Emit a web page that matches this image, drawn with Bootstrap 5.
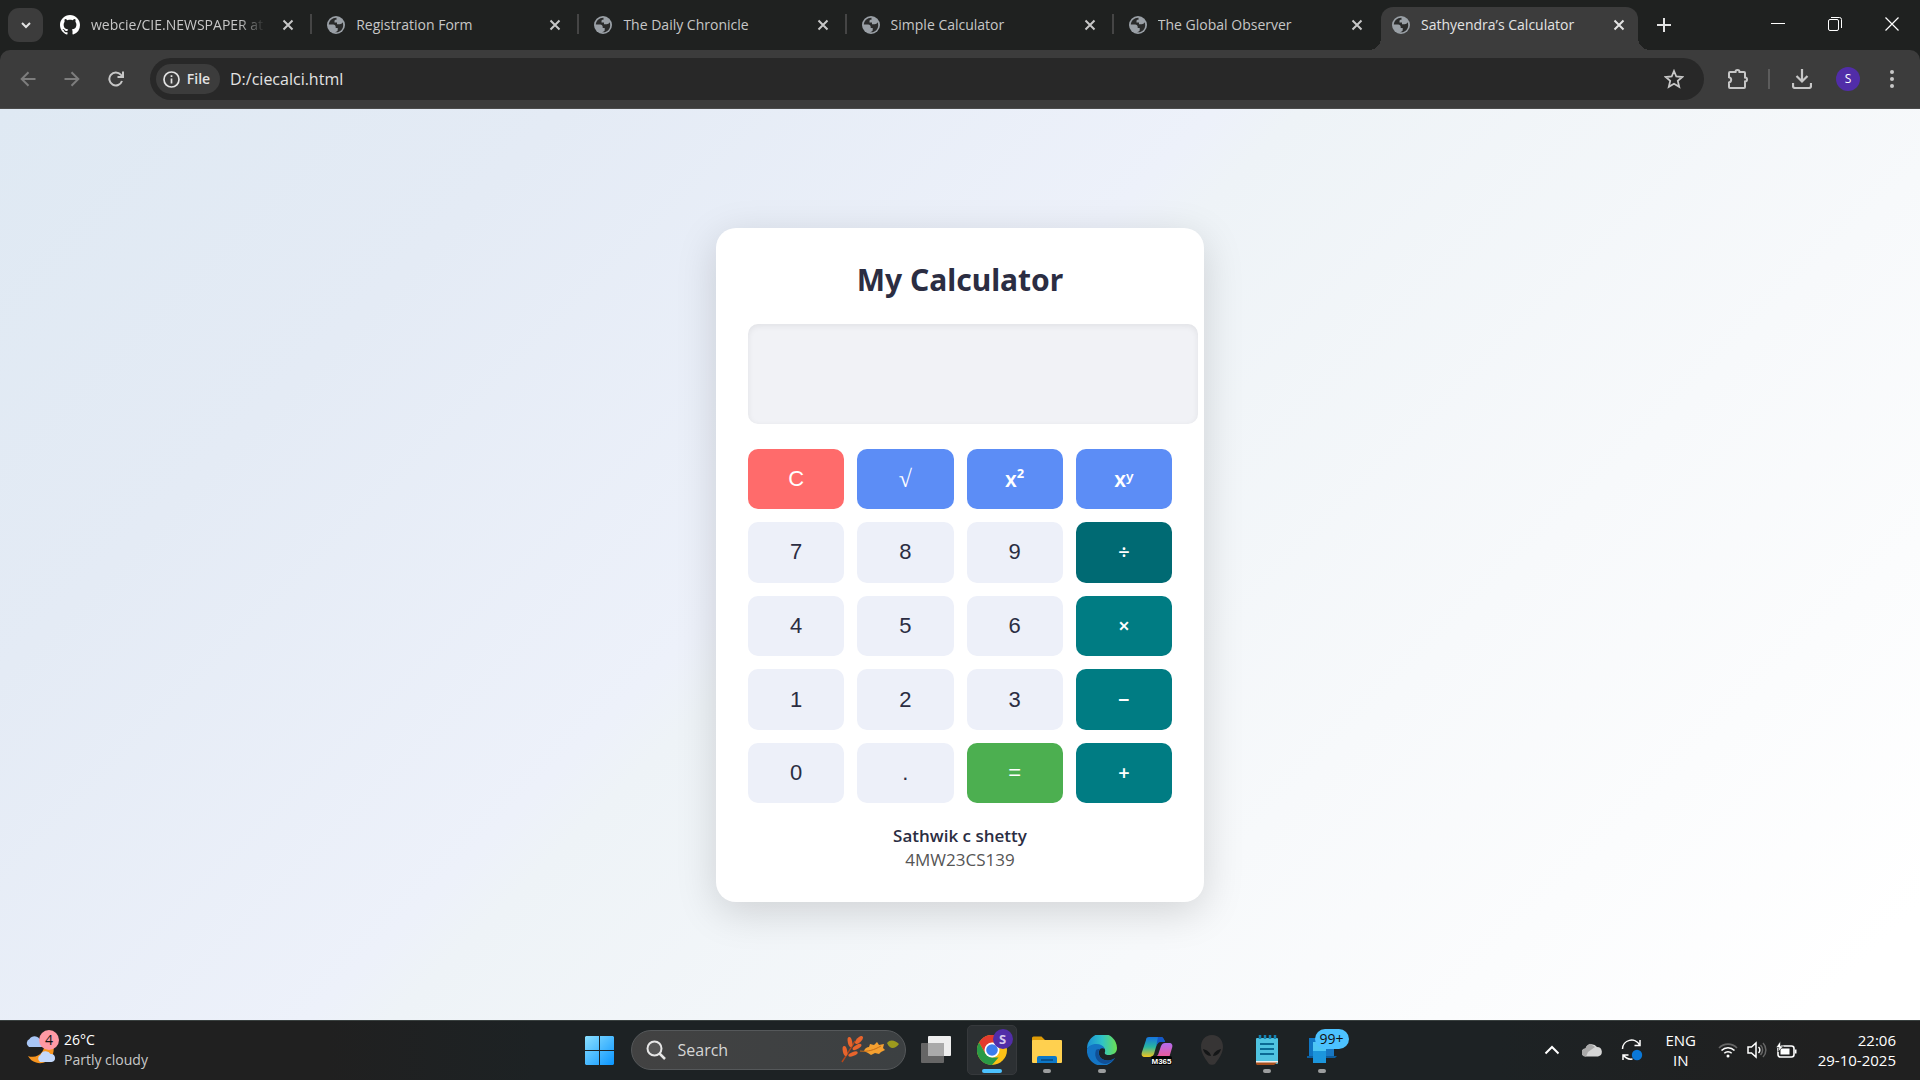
<!DOCTYPE html>
<html lang="en">
<head>
<meta charset="utf-8">
<meta name="viewport" content="width=device-width, initial-scale=1">
<title>Sathyendra’s Calculator</title>
<link href="https://cdn.jsdelivr.net/npm/bootstrap@5.3.0/dist/css/bootstrap.min.css" rel="stylesheet">
<style>
  body { font-family: "Open Sans", "Noto Sans", sans-serif; font-size: 14px; line-height: 20px; }
  button { font-family: inherit; }
  svg { display: block; flex: none; }
  .plain { background: none; border: 0; padding: 0; color: inherit; display: flex; align-items: center; justify-content: center; flex: none; }

  /* tab strip */
  .strip { background: #1f2120; height: 50px; color: #c7c7c7; padding-left: 8px; }
  .tab-menu { width: 35px; height: 34px; border-radius: 11px; background: #3c3c3c; color: #e3e3e3; }
  .tabs { padding-left: 8px; min-width: 0; flex: 0 1 1595px; }
  .tab-item { flex: 1 1 0; min-width: 0; height: 43px; padding: 0 17px 7px 15px; position: relative; }
  .tab-item .tab-name { color: inherit; text-decoration: none; flex: 1; white-space: nowrap; overflow: hidden; font-size: 14px; margin-left: 11px; }
  .tab-item:first-child { padding-left: 9px; }
  .tab-item .fade-end { -webkit-mask-image: linear-gradient(90deg, #000 85%, transparent); mask-image: linear-gradient(90deg, #000 85%, transparent); }
  .tab-item.split::after { content: ""; position: absolute; right: 0; top: 7px; width: 2px; height: 20px; background: #454545; }
  .tab-item.current { background: #3c3c3c; color: #e3e3e3; border-radius: 12px 12px 0 0; flex: 0 0 257px; padding: 0 12px 7px 11px; }
  .tab-item.current::before, .tab-item.current::after { content: ""; position: absolute; bottom: 0; width: 12px; height: 12px; }
  .tab-item.current::before { left: -12px; background: radial-gradient(circle at 0 0, transparent 12px, #3c3c3c 12px); }
  .tab-item.current::after { right: -12px; background: radial-gradient(circle at 100% 0, transparent 12px, #3c3c3c 12px); }
  .close-x { width: 14px; height: 14px; }
  .win { width: 57px; height: 40px; color: #fff; }

  /* toolbar */
  .stripwrap { background: #1f2120; }
  .tools { background: #3c3c3c; height: 59px; border-bottom: 1px solid #4b4b4b; color: #c7c7c7; border-radius: 10px 10px 0 0; padding: 0 6px; }
  .tool { width: 44px; height: 34px; }
  .dim { color: #7d7d7d; }
  .omni { background: #282828; height: 42px; border-radius: 21px; padding: 0 20px 0 6px; margin-left: 12px; }
  .chip { background: #3c3c3c; height: 30px; border-radius: 15px; padding: 0 10px 0 7px; color: #e3e3e3; font-size: 14px; font-weight: 600; gap: 7px; width: 64px; }
  .omni input { background: none; border: 0; outline: 0; color: #e3e3e3; font-size: 16px; padding: 0 0 0 10px; }
  .avatar { width: 24px; height: 24px; border-radius: 50%; background: #512da8; color: #fff; font-size: 12px; }
  .rule { width: 2px; height: 20px; background: #5c5c5c; }

  /* page */
  main { background: linear-gradient(135deg, #dfe9f3 0%, #e4ebf5 20%, #edf1fa 43%, #eef3f7 46%, #f7f9fb 70%, #fff 96%); }
  .calc { width: 488px; background: #fff; border-radius: 20px; padding: 32px 32px 30px; box-shadow: 0 10px 40px rgba(0,0,0,.15); color: #2b2d42; }
  .calc h1 { font: 700 30px/40px "Noto Sans", sans-serif; margin: 0 0 24px; }
  .screen { width: 450px; height: 100px; background: #f1f2f6; border: 0; border-radius: 10px; box-shadow: inset 0 2px 6px rgba(0,0,0,.07); padding: 15px; font-size: 32px; text-align: right; }
  .keys { display: grid; grid-template: repeat(5, 1fr) / repeat(4, 1fr); gap: 13px; height: 355px; margin-top: 25px; }
  .keys button { border: 0; padding: 0; border-radius: 10px; background: #edf0f9; color: #2b2d42; font: 400 22px/30px "Liberation Sans", Arial, sans-serif; }
  .keys .clear { background: #ff6b6b; color: #fff; }
  .keys .fn { background: #5c8df6; color: #fff; }
  .keys .root { font: 400 24px/30px "Liberation Serif", serif; }
  .keys .op { background: #007c83; color: #fff; font: 600 20px/30px "Noto Sans", sans-serif; }
  .keys .strong { font: 600 21px/30px "Noto Sans", sans-serif; }
  .keys .over { background: #006a73; }
  .keys .eq { background: #4caf50; color: #fff; }
  .owner { font-size: 17px; line-height: 24px; margin-top: 20px; }
  .owner-id { color: #555; }

  /* taskbar */
  .taskbar { height: 60px; color: #fff; border-top: 1px solid #39403f; padding-bottom: 1px; background: linear-gradient(90deg, #202020 0, #202020 17%, #1d2224 28%, #1d2224 78%, #202020 95%); }
  .side { flex: 1 1 0; min-width: 0; }
  .weather { padding-left: 24px; }
  .subtle { color: #c8c8c8; }
  .count { position: absolute; left: 15px; top: -4px; width: 20px; height: 20px; border-radius: 50%; background: #ff99a4; color: #111; font-size: 14px; text-align: center; line-height: 20px; }
  .start { width: 52px; }
  .find { width: 275px; height: 40px; border-radius: 20px; border: 1px solid #55585a; background: linear-gradient(90deg, #424242, #3c4042); padding: 0 6px 0 14px; margin: 0 7px 0 5px; }
  .find input { background: none; border: 0; outline: 0; color: #d6d6d6; font-size: 16px; padding: 0 0 0 12px; width: 150px; }
  .find input::placeholder { color: #d6d6d6; opacity: 1; }
  .apps { gap: 5px; }
  .app { width: 50px; height: 50px; border-radius: 5px; position: relative; border: 1px solid transparent; }
  .app.front { background: #2c3033; border-color: #36393c; }
  .app::after { content: ""; position: absolute; bottom: 1px; width: 8px; height: 4px; border-radius: 2px; background: #9b9d9e; }
  .app.front::after { width: 20px; background: #4cc2ff; }
  .app.idle::after { display: none; }
  .badge-s, .badge-99 { position: absolute; border-radius: 10px; font-size: 13px; line-height: 20px; }
  .badge-s { left: 25px; top: 3px; width: 20px; background: #512da8; color: #d5c8ee; font-weight: 700; }
  .badge-99 { left: 17px; top: 3px; width: 34px; background: #4cc2ff; color: #111; font-size: 14px; }
  .tray { padding-right: 24px; font-size: 15px; }
  .tray-icon { width: 40px; }
  .lang { width: 58px; }
</style>
</head>
<body class="d-flex flex-column vh-100 overflow-hidden">

<svg width="0" height="0" class="position-absolute" aria-hidden="true">
  <symbol id="globe" viewBox="0 0 18 18"><circle cx="9" cy="9" r="9" fill="#9aa0a6"/><path d="M9.500 1.800C5.400 1.600 2 5 1.800 8.600h4.400c1.500 0 2.500 1 2.500 2.400v1h2v2.300c0 .6-.8 1.200-2.700 1.900 5 .6 8.200-3 8.200-7 0-1.200-.2-2-.6-2.900-.5 1.300-1.600 2-3 2H10V6.600H7.500V5c0-.9.7-1.300 1.500-1.300h.5z" fill="#2a2b2b"/></symbol>
  <symbol id="x" viewBox="0 0 14 14"><path d="M2.500 2.500l9 9m0-9l-9 9" stroke="currentColor" stroke-width="2"/></symbol>
</svg>

<header>
  <div class="strip d-flex align-items-start">
    <button class="plain tab-menu mt-2" aria-label="Search tabs"><svg width="12" height="12" viewBox="0 0 12 12"><path d="M2 4l4 4 4-4" fill="none" stroke="currentColor" stroke-width="2"/></svg></button>
    <nav class="tabs d-flex align-self-end">
      <div class="tab-item split d-flex align-items-center">
        <svg width="20" height="20" viewBox="0 0 16 16" fill="#fff"><path d="M8 0C3.580 0 0 3.580 0 8c0 3.540 2.290 6.530 5.470 7.590.4.070.55-.17.55-.38 0-.19-.01-.82-.01-1.490-2.010.37-2.530-.49-2.690-.94-.09-.23-.48-.94-.82-1.130-.28-.15-.68-.52-.01-.53.63-.01 1.080.58 1.230.82.72 1.210 1.870.87 2.330.66.070-.52.28-.87.51-1.070-1.780-.2-3.640-.89-3.640-3.950 0-.87.31-1.590.82-2.150-.08-.2-.36-1.020.08-2.120 0 0 .67-.21 2.200.82.64-.18 1.320-.27 2-.27s1.360.09 2 .27c1.530-1.040 2.200-.82 2.200-.82.44 1.100.16 1.920.08 2.120.51.56.82 1.270.82 2.150 0 3.070-1.870 3.750-3.650 3.950.29.25.54.73.54 1.480 0 1.070-.01 1.930-.01 2.200 0 .21.15.46.55.38A8.010 8.010 0 0 0 16 8c0-4.420-3.580-8-8-8z"/></svg>
        <a href="#" class="tab-name fade-end me-3">webcie/CIE.NEWSPAPER at</a>
        <button class="plain" aria-label="Close tab"><svg class="close-x"><use href="#x"/></svg></button>
      </div>
      <div class="tab-item split d-flex align-items-center"><svg width="18" height="18"><use href="#globe"/></svg><a href="#" class="tab-name">Registration Form</a><button class="plain" aria-label="Close tab"><svg class="close-x"><use href="#x"/></svg></button></div>
      <div class="tab-item split d-flex align-items-center"><svg width="18" height="18"><use href="#globe"/></svg><a href="#" class="tab-name">The Daily Chronicle</a><button class="plain" aria-label="Close tab"><svg class="close-x"><use href="#x"/></svg></button></div>
      <div class="tab-item split d-flex align-items-center"><svg width="18" height="18"><use href="#globe"/></svg><a href="#" class="tab-name">Simple Calculator</a><button class="plain" aria-label="Close tab"><svg class="close-x"><use href="#x"/></svg></button></div>
      <div class="tab-item d-flex align-items-center"><svg width="18" height="18"><use href="#globe"/></svg><a href="#" class="tab-name">The Global Observer</a><button class="plain" aria-label="Close tab"><svg class="close-x"><use href="#x"/></svg></button></div>
      <div class="tab-item current d-flex align-items-center"><svg width="18" height="18"><use href="#globe"/></svg><a href="#" class="tab-name">Sathyendra’s Calculator</a><button class="plain" aria-label="Close tab"><svg class="close-x"><use href="#x"/></svg></button></div>
    </nav>
    <button class="plain mt-2 ms-2 tab-menu bg-transparent" aria-label="New tab"><svg width="14" height="14" viewBox="0 0 14 14"><path d="M7 0v14M0 7h14" stroke="currentColor" stroke-width="2"/></svg></button>
    <div class="d-flex ms-auto mt-1">
      <button class="plain win" aria-label="Minimize"><svg width="14" height="14"><path d="M0 6.500h14" stroke="currentColor"/></svg></button>
      <button class="plain win" aria-label="Restore"><svg width="14" height="14" fill="none" stroke="currentColor"><rect x=".5" y="2.500" width="10" height="11" rx="1.500"/><path d="M3 .5h8.500a2 2 0 0 1 2 2V11"/></svg></button>
      <button class="plain win" aria-label="Close"><svg width="14" height="14"><path d="M.5.5l13 13m0-13l-13 13" stroke="currentColor" stroke-width="1.200"/></svg></button>
    </div>
  </div>
  <div class="stripwrap">
  <div class="tools d-flex align-items-center">
    <button class="plain tool dim" aria-label="Back"><svg width="16" height="16" viewBox="0 0 16 16" fill="none" stroke="currentColor" stroke-width="2"><path d="M15.500 8H2M8.500 1.200L1.700 8l6.800 6.800"/></svg></button>
    <button class="plain tool dim" aria-label="Forward"><svg width="16" height="16" viewBox="0 0 16 16" fill="none" stroke="currentColor" stroke-width="2"><path d="M.5 8H14M7.500 1.200L14.300 8l-6.800 6.800"/></svg></button>
    <button class="plain tool" aria-label="Reload"><svg width="16" height="16" viewBox="0 0 16 16" fill="none" stroke="currentColor" stroke-width="2"><path d="M14 10a6.500 6.500 0 1 1-1.200-6.300L14.500 5.500M15 .5V6H9.500"/></svg></button>
    <div class="omni d-flex align-items-center flex-grow-1">
      <button class="plain chip"><svg width="17" height="17" viewBox="0 0 17 17" fill="none" stroke="currentColor" stroke-width="1.700"><circle cx="8.500" cy="8.500" r="7.500"/><path d="M8.500 7.500v5M8.500 4.300v1.800"/></svg>File</button>
      <input class="flex-grow-1" type="text" value="D:/ciecalci.html" aria-label="Address">
      <button class="plain" aria-label="Bookmark"><svg width="20" height="20" viewBox="0 0 20 20"><path d="M10 2l2.300 5.500 6 .5-4.500 3.900 1.400 5.900L10 14.700l-5.200 3.100 1.400-5.900L1.700 8l6-.5z" fill="none" stroke="currentColor" stroke-width="1.800"/></svg></button>
    </div>
    <button class="plain tool ms-2 me-1 ps-2" aria-label="Extensions"><svg width="22" height="22" viewBox="0 0 22 22"><path d="M3 4h5.500a2 2 0 0 1 4 0H17a1 1 0 0 1 1 1v4.500a2 2 0 0 1 0 4V19a1 1 0 0 1-1 1H3a1 1 0 0 1-1-1v-4.500a2.700 2.700 0 0 0 0-5.300V5a1 1 0 0 1 1-1z" fill="none" stroke="currentColor" stroke-width="2"/></svg></button>
    <div class="rule ms-2"></div>
    <button class="plain tool ms-2 me-1 ps-1" aria-label="Downloads"><svg width="20" height="20" viewBox="0 0 20 20" fill="none" stroke="currentColor" stroke-width="2.200"><path d="M10 0v12M4.500 7L10 12.500 15.500 7M1 14v3a2 2 0 0 0 2 2h14a2 2 0 0 0 2-2v-3"/></svg></button>
    <button class="plain tool" aria-label="Profile"><span class="avatar d-flex align-items-center justify-content-center">S</span></button>
    <button class="plain tool" aria-label="Menu"><svg width="4" height="18" fill="currentColor"><circle cx="2" cy="2" r="2"/><circle cx="2" cy="9" r="2"/><circle cx="2" cy="16" r="2"/></svg></button>
  </div>
  </div>
</header>

<main class="flex-grow-1 d-flex align-items-center justify-content-center">
  <section class="calc">
    <h1 class="text-center">My Calculator</h1>
    <input class="screen d-block" type="text" aria-label="Result" readonly>
    <div class="keys">
      <button class="clear">C</button><button class="fn root">√</button><button class="fn strong">x²</button><button class="fn strong">xʸ</button>
      <button>7</button><button>8</button><button>9</button><button class="op over">÷</button>
      <button>4</button><button>5</button><button>6</button><button class="op">×</button>
      <button>1</button><button>2</button><button>3</button><button class="op">−</button>
      <button>0</button><button>.</button><button class="eq">=</button><button class="op">+</button>
    </div>
    <div class="owner text-center"><div class="fw-semibold">Sathwik c shetty</div><div class="owner-id">4MW23CS139</div></div>
  </section>
</main>

<footer class="taskbar d-flex align-items-center">
  <div class="side weather d-flex align-items-center">
    <button class="plain text-start">
      <span class="position-relative"><svg width="32" height="32" viewBox="0 0 32 32"><path d="M28 9a13 13 0 0 1-24 13 12 12 0 0 0 16-8z" fill="#f7941e"/><path d="M5 13a4.500 4.500 0 0 1 .5-8 6 6 0 0 1 10 0 4 4 0 0 1 2 8z" fill="#a9c6f5"/><path d="M16 28a4 4 0 0 1 .5-7 5.500 5.500 0 0 1 10-1 4 4 0 0 1 1 8z" fill="#c3d8fb"/></svg><span class="count">4</span></span>
      <span class="ms-2 d-block">26°C<br><span class="subtle">Partly cloudy</span></span>
    </button>
  </div>
  <div class="d-flex align-items-center">
    <button class="plain start" aria-label="Start"><svg width="29" height="29" viewBox="0 0 29 29"><defs><linearGradient id="w" x2="1" y2="1"><stop stop-color="#8adfff"/><stop offset="1" stop-color="#0a95ff"/></linearGradient></defs><path d="M1 0h13v14H0V1zM15 0h13l1 1v13H15zM0 15h14v14H1l-1-1zM15 15h14v13l-1 1H15z" fill="url(#w)"/></svg></button>
    <div class="find d-flex align-items-center">
      <svg width="20" height="20" viewBox="0 0 20 20" fill="none" stroke="#e6e6e6" stroke-width="2"><circle cx="8.500" cy="8.500" r="7" fill="#565656"/><path d="M13.500 13.500L19 19" stroke-width="2.500"/></svg>
      <input type="text" placeholder="Search" aria-label="Search">
      <svg class="ms-auto" width="58" height="28" viewBox="0 0 58 28"><path d="M1 26Q9 14 14 5" stroke="#b6461a" stroke-width="1.500" fill="none"/><g fill="#e8642c"><ellipse cx="4" cy="15" rx="2.200" ry="5" transform="rotate(-12 4 15)"/><ellipse cx="9" cy="6" rx="2.200" ry="5" transform="rotate(-12 9 6)"/><ellipse cx="18" cy="4" rx="2.300" ry="5" transform="rotate(45 18 4)"/><ellipse cx="16" cy="11" rx="2" ry="5" transform="rotate(60 16 11)"/><ellipse cx="12" cy="18" rx="2" ry="5" transform="rotate(68 12 18)"/></g><path d="M23 15c1-3 3-4 5-4l1-3 4 1 3-3 2 3 5-1-1 4 2 2-4 2-2 2-4-1-4 2-3-2z" fill="#f5a030"/><path d="M19 15c8 1 14-1 21-5" stroke="#c96d16" fill="none"/><path d="M41 6l5 1c3-4 8-3 12 1-4 5-9 6-12-1" fill="#9c9a1d"/></svg>
    </div>
    <button class="app plain idle me-1" aria-label="Task view"><svg class="me-1" width="30" height="28" viewBox="0 0 30 28"><rect x="7" width="23" height="20" rx="1" fill="#eee"/><rect y="7" width="23" height="20" rx="1" fill="#666"/><path d="M7 7h16v13H7z" fill="#aaa"/></svg></button>
    <div class="apps d-flex">
      <button class="app plain front" aria-label="Chrome"><svg width="30" height="30" viewBox="0 0 30 30"><circle cx="15" cy="15" r="15" fill="#fbc116"/><path d="M2 7.500A15 15 0 0 1 28 7.500H15L8.500 18.700z" fill="#e33b2e"/><path d="M2 7.500l6.500 11.200L15 22.500h6.500L15 30A15 15 0 0 1 2 7.500z" fill="#2a9a46"/><circle cx="15" cy="15" r="7.500" fill="#fff"/><circle cx="15" cy="15" r="5.800" fill="#3b7ded"/></svg><span class="badge-s">S</span></button>
      <button class="app plain" aria-label="File Explorer"><svg width="30" height="28" viewBox="0 0 30 28"><path d="M0 2a1.500 1.500 0 0 1 1.500-1.500h8L13 4v5H0z" fill="#dd9b06"/><rect y="4" width="30" height="23" rx="1" fill="#ffd04f"/><path d="M5 27v-5a2 2 0 0 1 2-2h16a2 2 0 0 1 2 2v5z" fill="#0d78c8"/><path d="M9 24h12" stroke="#08477d" stroke-width="1.500"/></svg></button>
      <button class="app plain" aria-label="Edge"><svg width="30" height="30" viewBox="0 0 30 30"><defs><linearGradient id="e"><stop stop-color="#1a8fd6"/><stop offset=".5" stop-color="#2fc3c8"/><stop offset="1" stop-color="#6be052"/></linearGradient></defs><path d="M0 14A15 15 0 0 1 30 13c0 5-4 7-8 7-3 0-5-1-4-3 1-4-3-7-8-7S1 12 0 14z" fill="url(#e)"/><path d="M0 14c3-6 15-7 18 0-5-3-8 3-5 8 3 4 9 5 15 1A15 15 0 0 1 0 14z" fill="#1475c4"/><path d="M9 15c-3 8 3 14 10 14 4-1 7-3 9-6-6 4-12 3-15-1-2-3-2-6 0-8-2 0-3 0-4 1z" fill="#114f96"/></svg></button>
      <button class="app plain idle" aria-label="Microsoft 365"><svg width="32" height="30" viewBox="0 0 32 30"><defs><linearGradient id="m" x2="0" y2="1"><stop stop-color="#1674e0"/><stop offset=".5" stop-color="#28b6a0"/><stop offset="1" stop-color="#f4c51d"/></linearGradient><linearGradient id="n" x2="0" y2="1"><stop stop-color="#b36cf0"/><stop offset="1" stop-color="#f2588f"/></linearGradient></defs><path d="M8 2h12c2 0 3 2 4 5h-5c-2 0-3 2-4 5l-2 7c-1 2-2 3-5 3H4c-3 0-4-2-3-5L5 5c0-2 1-3 3-3z" fill="url(#m)"/><path d="M17 2h3c2 0 3 2 4 5h-5c-2 0-3 2-4 5z" fill="#1557c8"/><path d="M24 8h4c3 0 4 2 3 5l-3 10H13l4-3 3-9c1-2 2-3 4-3z" fill="url(#n)"/><rect x="10" y="21" width="21" height="9" rx="2" fill="#050505"/><text x="20.500" y="28.500" fill="#fff" font-family="Liberation Sans" font-weight="700" font-size="8" text-anchor="middle">M365</text></svg></button>
      <button class="app plain idle" aria-label="Alienware"><svg width="22" height="30" viewBox="0 0 22 30"><path d="M11 0c7 0 11 5 11 12 0 7-6 14-8 17-1 1-5 1-6 0C6 26 0 19 0 12 0 5 4 0 11 0z" fill="#373535"/><path d="M2 14c4 1 7 3 8 7-4 0-7-3-8-7zM20 14c-4 1-7 3-8 7 4 0 7-3 8-7z" fill="#141617"/></svg></button>
      <button class="app plain" aria-label="Notepad"><svg width="22" height="30" viewBox="0 0 22 30"><rect y="3" width="22" height="26" rx="1" fill="#4fc3e0"/><path d="M0 26h22v1L18 30H1l-1-1z" fill="#a8501e"/><path d="M0 26h22v1.500H0z" fill="#eee"/><path d="M4 9h14M4 14h14M4 19h14" stroke="#0b6a94" stroke-width="2"/><path d="M4 0v4M9 0v4M14 0v4M19 0v4" stroke="#1484b4" stroke-width="2.500"/></svg></button>
      <button class="app plain" aria-label="Phone Link"><svg width="30" height="28" viewBox="0 0 30 28"><path d="M2 2h12v18H2z" fill="#0f76c4"/><path d="M0 20h30l-2 2H0z" fill="#0b5d9e"/><path d="M18 8h9v12h-9z" fill="#1877c2"/><path d="M6 6h13v21H6z" fill="#1c96dc"/><path d="M6 6h13v9H6z" fill="#4cc6f4"/></svg><span class="badge-99">99+</span></button>
    </div>
  </div>
  <div class="side tray d-flex align-items-center justify-content-end">
    <button class="plain tray-icon" aria-label="Hidden icons"><svg width="16" height="10" viewBox="0 0 16 10"><path d="M1.500 8.500L8 2l6.500 6.500" fill="none" stroke="#fff" stroke-width="2"/></svg></button>
    <button class="plain tray-icon" aria-label="OneDrive"><svg width="20" height="14" viewBox="0 0 20 14"><path d="M4 13.500a4 4 0 0 1-.5-8A6.500 6.500 0 0 1 15 4a4.800 4.800 0 0 1 1 9.500z" fill="#d5d5d5"/><path d="M4 13.500a4 4 0 0 1-.5-8A6.500 6.500 0 0 1 8 .8L13 4 6 9z" fill="#a9a9a9"/></svg></button>
    <button class="plain tray-icon" aria-label="Updates"><svg width="22" height="22" viewBox="0 0 22 22" fill="none" stroke="#fff" stroke-width="1.500"><path d="M1.500 10A9 9 0 0 1 18.500 6M19 1v5.500h-5.500M2 21v-5h5.500M2.500 16a9 9 0 0 0 9 4"/><circle cx="16" cy="16" r="5.200" fill="#0a78d8" stroke="none"/></svg></button>
    <button class="plain lang">ENG<br>IN</button>
    <button class="plain gap-2 ms-2 me-3" aria-label="Network, sound and battery">
      <svg width="20" height="16" viewBox="0 0 20 16" fill="none" stroke="#fff" stroke-width="1.600"><path d="M1 6a12.500 12.500 0 0 1 18 0" stroke="#666"/><path d="M3.500 8.500a9 9 0 0 1 13 0M6.300 11.200a5.300 5.300 0 0 1 7.400 0"/><circle cx="10" cy="14" r="1.500" fill="#fff" stroke="none"/></svg>
      <svg width="22" height="18" viewBox="0 0 22 18" fill="none" stroke="#fff" stroke-width="1.500"><path d="M2 6h3.500L10 2v14l-4.500-4H2z"/><path d="M12.500 6a4 4 0 0 1 0 6"/><path d="M14.500 4a7 7 0 0 1 0 10M17 2a10 10 0 0 1 0 14" stroke="#666"/></svg>
      <svg width="22" height="18" viewBox="0 0 22 18"><rect x="2" y="5" width="16" height="11" rx="2.500" fill="none" stroke="#fff" stroke-width="1.600"/><rect x="4.500" y="7.500" width="9" height="6" fill="#fff"/><path d="M19 8.500h1.500v4H19z" fill="#fff"/><path d="M4.500 0L0 6.500h3L2 11l5.500-6h-3z" fill="#fff" stroke="#1f2122" stroke-width=".6"/></svg>
    </button>
    <div class="text-end ms-1">22:06<br>29-10-2025</div>
  </div>
</footer>
<script src="https://cdn.jsdelivr.net/npm/bootstrap@5.3.0/dist/js/bootstrap.bundle.min.js"></script>
</body>
</html>
